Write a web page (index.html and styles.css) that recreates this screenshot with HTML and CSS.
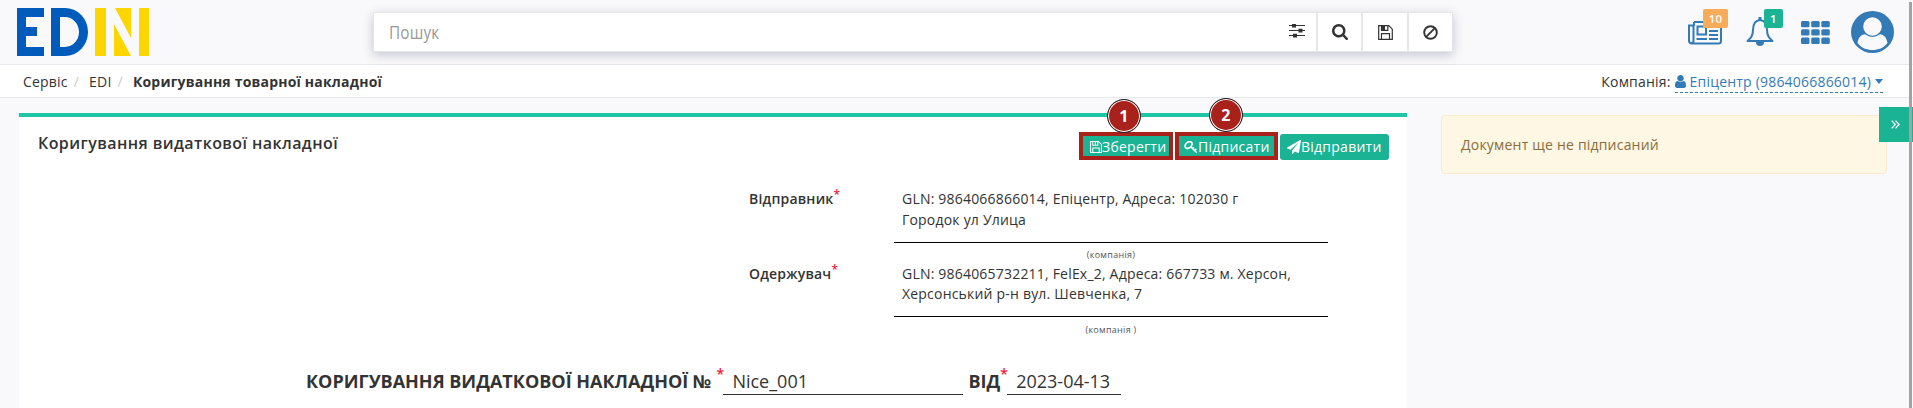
FILE: index.html
```html
<!DOCTYPE html>
<html lang="uk">
<head>
<meta charset="utf-8">
<title>EDIN</title>
<link rel="stylesheet" href="styles.css">
</head>
<body>
<header class="topbar">
  <svg class="logo" viewBox="0 0 132 48" role="img" aria-label="EDIN">
    <path fill="#005bbb" d="M0 0H27V9H9V19H20V28H9V39H27V48H0ZM34 0H48A23 24 0 0 1 48 48H34ZM43 9V39H48A14 15 0 0 0 48 9Z" fill-rule="evenodd"/>
    <path fill="#ffd500" d="M78 0H89V48H78ZM97 16 114 48H97ZM98 0H114V30ZM122 0H132V48H122Z"/>
  </svg>
  <div class="search">
    <div class="search-input"><span class="placeholder">Пошук</span>
      <svg class="ic-sliders" viewBox="0 0 16 14"><path d="M0 1.5H16M0 6.5H16M0 11.5H16" stroke="#333" stroke-width="1.2"/><path fill="#333" d="M3 0h4v3.4H3zM9.5 4.8h4v3.6h-4zM4 9.8h4v3.6H4z"/></svg>
    </div>
    <div class="search-btn"><svg width="16" height="16" viewBox="64 128 1664 1664" fill="#333"><path d="M1216 832q0-185-131.500-316.500t-316.500-131.500-316.500 131.500-131.500 316.500 131.500 316.500 316.500 131.500 316.500-131.500 131.500-316.500zm512 832q0 52-38 90t-90 38q-54 0-90-38l-343-342q-179 124-399 124-143 0-273.500-55.500t-225-150-150-225-55.500-273.500 55.500-273.500 150-225 225-150 273.500-55.500 273.500 55.500 225 150 150 225 55.500 273.500q0 220-124 399l343 343q37 37 37 90z"/></svg></div>
    <div class="search-btn"><svg width="15" height="15" viewBox="0 0 15 15" fill="none" stroke="#333" stroke-width="1.2"><path d="M.7.7H10.800L14.300 4.200V14.300H.7ZM3.500 14V8.700H11.500V14M3.500 1V5.300H9.800V1"/><path fill="#333" stroke="none" d="M4 1H7V5H4Z"/></svg></div>
    <div class="search-btn"><svg width="15" height="15" viewBox="0 0 15 15" fill="none" stroke="#333" stroke-width="1.900"><circle cx="7.500" cy="7.500" r="6.300"/><path d="M3.200 11.800 11.800 3.200"/></svg></div>
  </div>
  <nav class="tools">
    <div class="tool news"><svg width="34" height="24" viewBox="0 0 34 24" fill="none" stroke="#337ab7" stroke-width="2"><path d="M6 1H33V20Q33 22.500 30.500 22.500H4Q1 22.500 1 19.500V4.500H5.500V19.500Q5.500 22 3.500 22.300M6 1V5"/><path d="M9.500 5.500H18V13.500H9.500ZM8.500 18H19M21 18H30M21 14H30M21 10H30M21 6H30"/></svg><span class="badge orange">10</span></div>
    <div class="tool bell"><svg width="28" height="30" viewBox="0 0 28 30" fill="none" stroke="#337ab7" stroke-width="2"><path d="M14 3C8 3.500 7 8 7 13C7 18 5.500 21 1.500 24H26.500C22.500 21 21 18 21 13C21 8 20 3.500 14 3Z" stroke-linejoin="round"/><path d="M14 0V3" stroke-width="3"/><path d="M10 25A4 4 0 0 0 18 25Z" fill="#337ab7" stroke="none"/></svg><span class="badge green">1</span></div>
    <svg class="grid-icon" width="29" height="23" viewBox="0 0 29 23" fill="#337ab7"><rect width="8.500" height="6.300" rx="1.500"/><rect x="10.200" width="8.500" height="6.300" rx="1.500"/><rect x="20.300" width="8.500" height="6.300" rx="1.500"/><rect y="8.300" width="8.500" height="6.300" rx="1.500"/><rect x="10.200" y="8.300" width="8.500" height="6.300" rx="1.500"/><rect x="20.300" y="8.300" width="8.500" height="6.300" rx="1.500"/><rect y="16.600" width="8.500" height="6.300" rx="1.500"/><rect x="10.200" y="16.600" width="8.500" height="6.300" rx="1.500"/><rect x="20.300" y="16.600" width="8.500" height="6.300" rx="1.500"/></svg>
    <svg class="avatar" width="43" height="42" viewBox="0 0 43 42"><ellipse cx="21.500" cy="21" rx="21.500" ry="21" fill="#337ab7"/><path fill="#f9f9fb" d="M6.500 32C7.500 26.500 10 23.600 14 23.300Q21.500 28.500 29 23.300C33 23.600 35.500 26.500 36.500 32C32.500 37 27.500 39 21.500 39S10.500 37 6.500 32Z"/><circle cx="21.500" cy="15.500" r="9.300" fill="#f9f9fb"/></svg>
  </nav>
</header>
<div class="crumbbar">
  <ol class="crumbs"><li>Сервіс</li><li>EDI</li><li><b>Коригування товарної накладної</b></li></ol>
  <div class="company">Компанія: <a class="company-link"><svg width="11" height="13" viewBox="256 128 1280 1536" preserveAspectRatio="none" fill="#337ab7"><path d="M1536 1399q0 109-62.500 187t-150.500 78h-854q-88 0-150.500-78t-62.500-187q0-85 8.500-160.500t31.500-152 58.500-131 94-89 134.500-34.500q131 128 313 128t313-128q76 0 134.500 34.500t94 89 58.500 131 31.500 152 8.500 160.500zm-256-887q0 159-112.500 271.500t-271.500 112.500-271.500-112.500-112.500-271.500 112.500-271.500 271.500-112.500 271.500 112.500 112.500 271.500z"/></svg><span>Епіцентр (9864066866014)</span><i class="caret"></i></a></div>
</div>
<main class="content">
  <section class="card">
    <div class="card-head">
      <h1>Коригування видаткової накладної</h1>
      <div class="actions">
        <button class="btn save"><svg width="12" height="12" viewBox="0 0 15 15" fill="none" stroke="#fff" stroke-width="1.300"><path d="M.7.7H10.800L14.300 4.200V14.300H.7ZM3.500 14V8.700H11.500V14M3.500 1V5.300H9.800V1M6.800 1V5"/></svg>Зберегти<span class="mark">1</span></button>
        <button class="btn sign"><svg width="14" height="13" viewBox="0 0 14 13" fill="none" stroke="#fff"><ellipse cx="4.600" cy="4" rx="4" ry="2.700" transform="rotate(-40 4.600 4)" stroke-width="1.700"/><path d="M6.500 5.500 12.800 11.800M10.500 9.500 12.300 7.800M8.600 7.600 10 6.300" stroke-width="1.500"/></svg>Підписати<span class="mark">2</span></button>
        <button class="btn send"><svg width="14" height="14" viewBox="0 0 1792 1792" fill="#fff"><path d="M1764 11q33 24 27 64l-256 1536q-5 29-32 45-14 8-31 8-11 0-24-5l-453-185-242 295q-18 23-49 23-13 0-22-4-19-7-30.500-23.500t-11.500-36.500v-349l864-1059-1069 925-395-162q-37-14-40-55-2-40 32-59l1664-960q15-9 32-9 20 0 36 11z"/></svg>Відправити</button>
      </div>
    </div>
    <div class="party">
      <div class="label">Відправник<sup>*</sup></div>
      <div class="value"><p>GLN: 9864066866014, Епіцентр, Адреса: 102030 г<br>Городок ул Улица</p><small>(компанія)</small></div>
    </div>
    <div class="party second">
      <div class="label">Одержувач<sup>*</sup></div>
      <div class="value"><p>GLN: 9864065732211, FelEx_2, Адреса: 667733 м. Херсон,<br>Херсонський р-н вул. Шевченка, 7</p><small>(компанія )</small></div>
    </div>
    <div class="doc-title">
      <b>КОРИГУВАННЯ ВИДАТКОВОЇ НАКЛАДНОЇ №</b><sup class="gap">*</sup><span class="field number">Nice_001</span><b class="from">ВІД</b><sup>*</sup><span class="field date">2023-04-13</span>
    </div>
  </section>
  <aside class="alert">Документ ще не підписаний</aside>
</main>
<div class="side-tab"><svg width="9" height="9" viewBox="0 0 9 9" fill="none" stroke="#fff" stroke-width="1.200"><path d="M.7.700 4.300 4.500.7 8.300M4.500.700 8.100 4.500 4.500 8.300"/></svg></div>
<div class="scrollbar"></div>
</body>
</html>
```
FILE: styles.css
```css
* { box-sizing: border-box; }
body {
  margin: 0;
  width: 1913px;
  height: 408px;
  overflow: hidden;
  background: #f9f9fb;
  color: #333;
  font: 14px/20px "Open Sans", "Noto Sans", sans-serif;
  letter-spacing: .2px;
}
svg { display: block; flex: none; }
.topbar {
  display: flex;
  height: 65px;
  padding: 0 19px 0 17px;
  border-bottom: 1px solid #e7eaec;
}
.logo { width: 132px; height: 48px; margin-top: 8px; }
.search {
  display: flex;
  width: 1080px;
  height: 40px;
  margin: 12px 0 0 224px;
  border: 1px solid #e5e6e7;
  background: #fff;
  box-shadow: 0 3px 10px rgba(60, 65, 110, .28);
}
.search-input {
  display: flex;
  align-items: center;
  flex: 1;
  justify-content: space-between;
  padding: 0 11px 0 15px;
}
.placeholder {
  color: #999;
  font-size: 18px;
  transform: scaleX(.85);
  transform-origin: left;
}
.ic-sliders { width: 16px; height: 14px; margin-top: -2px; }
.search-btn {
  display: flex;
  align-items: center;
  justify-content: center;
  width: 45.300px;
  border-left: 2px solid #e5e6e7;
}
.tools { display: flex; flex: 1; justify-content: flex-end; }
.tool { position: relative; }
.news { margin: 21px 24px 0 0; }
.bell { margin: 17px 27px 0 0; }
.grid-icon { margin: 21px 21px 0 0; }
.avatar { margin-top: 11px; }
.badge {
  position: absolute;
  height: 19px;
  border-radius: 2px;
  color: #fff;
  font-size: 11.500px;
  font-weight: 600;
  line-height: 19px;
  text-align: center;
}
.orange { left: 15px; top: -12px; width: 25px; background: #f8ac59; }
.green { left: 18px; top: -8px; width: 19px; background: #1ab394; }
.crumbbar {
  display: flex;
  align-items: center;
  justify-content: space-between;
  height: 33px;
  padding: 1px 30px 0 23px;
  border-bottom: 1px solid #e7eaec;
  background: #fff;
}
.crumbs { display: flex; margin: 0; padding: 0; list-style: none; }
.crumbs li + li::before { content: "/"; padding: 0 10px 0 6px; color: #ccc; }
.company { display: flex; gap: 4px; }
.company-link {
  display: flex;
  align-items: center;
  gap: 4px;
  height: 21px;
  margin-bottom: -1px;
  border-bottom: 1px dashed #337ab7;
  color: #337ab7;
}
.caret {
  width: 8px;
  height: 5px;
  background: #337ab7;
  clip-path: polygon(0 0, 100% 0, 50% 100%);
}
.content { display: flex; align-items: flex-start; gap: 34px; padding: 15px 26px 0 19px; }
.card { width: 1388px; height: 300px; border-top: 4px solid #1ec6a6; background: #fff; }
.card-head {
  display: flex;
  justify-content: space-between;
  height: 66px;
  padding: 17px 18px 0 19px;
}
h1 { margin: 0; font-size: 16px; font-weight: 600; line-height: 18px; letter-spacing: .42px; }
.actions { display: flex; gap: 2px; }
.btn {
  position: relative;
  display: flex;
  align-items: center;
  height: 26px;
  padding: 0 7px;
  border: 0;
  border-radius: 3px;
  background: #1ab394;
  color: #fff;
  font: inherit;
  letter-spacing: .25px;
  white-space: nowrap;
}
.save { width: 94px; padding-left: 11px; }
.sign { width: 103px; padding-left: 9px; }
.send { width: 109px; }
.save::after, .sign::after {
  content: "";
  position: absolute;
  inset: -2px 0 0;
  border: 4px solid #a9211b;
}
.mark {
  position: absolute;
  z-index: 1;
  left: 28px;
  top: -35px;
  width: 34px;
  height: 34px;
  border: 1px solid #222;
  border-radius: 50%;
  background: #a9211b;
  box-shadow: inset 0 0 0 1px #fff;
  font-size: 16px;
  font-weight: 700;
  line-height: 32px;
  text-align: center;
}
.sign .mark { left: 34px; top: -36px; }
.party { display: grid; grid-template-columns: 145px 434px; height: 74px; margin-left: 730px; }
.label { padding-top: 6px; font-weight: 600; }
sup { position: relative; top: 1px; color: #ed1c40; font-size: 12px; line-height: 0; }
.value p { height: 60px; margin: 0; padding: 6px 8px 0; border-bottom: 1px solid #000; line-height: 20.500px; }
.value small { display: block; padding-top: 2px; color: #555; font-size: 9px; letter-spacing: .3px; text-align: center; }
.second .label, .second p { padding-top: 7px; }
.second p { line-height: 20px; }
.second small { padding-top: 3px; }
.doc-title { display: flex; height: 28px; margin: 36px 0 0 287px; font-size: 18px; line-height: 28px; letter-spacing: 0; }
.doc-title sup { width: 7px; top: 7px; font-size: 14px; font-weight: 600; }
.doc-title .gap { margin-left: 5px; }
.field { border-bottom: 1px solid #333; padding-left: 9px; }
.number { width: 240px; }
.from { margin-left: 5px; }
.date { width: 114px; }
.alert {
  flex: 1;
  height: 59px;
  margin-top: 2px;
  padding: 19px;
  border: 1px solid #faebcc;
  border-radius: 4px;
  background: #fdf7e3;
  color: #8a6d3b;
}
.side-tab {
  position: absolute;
  left: 1879px;
  top: 107px;
  display: flex;
  align-items: center;
  width: 34px;
  height: 35px;
  padding-left: 12px;
  background: #1ab394;
}
.scrollbar { position: absolute; left: 1909px; top: 2px; width: 3px; height: 406px; background: #a2a2a2; }
```
